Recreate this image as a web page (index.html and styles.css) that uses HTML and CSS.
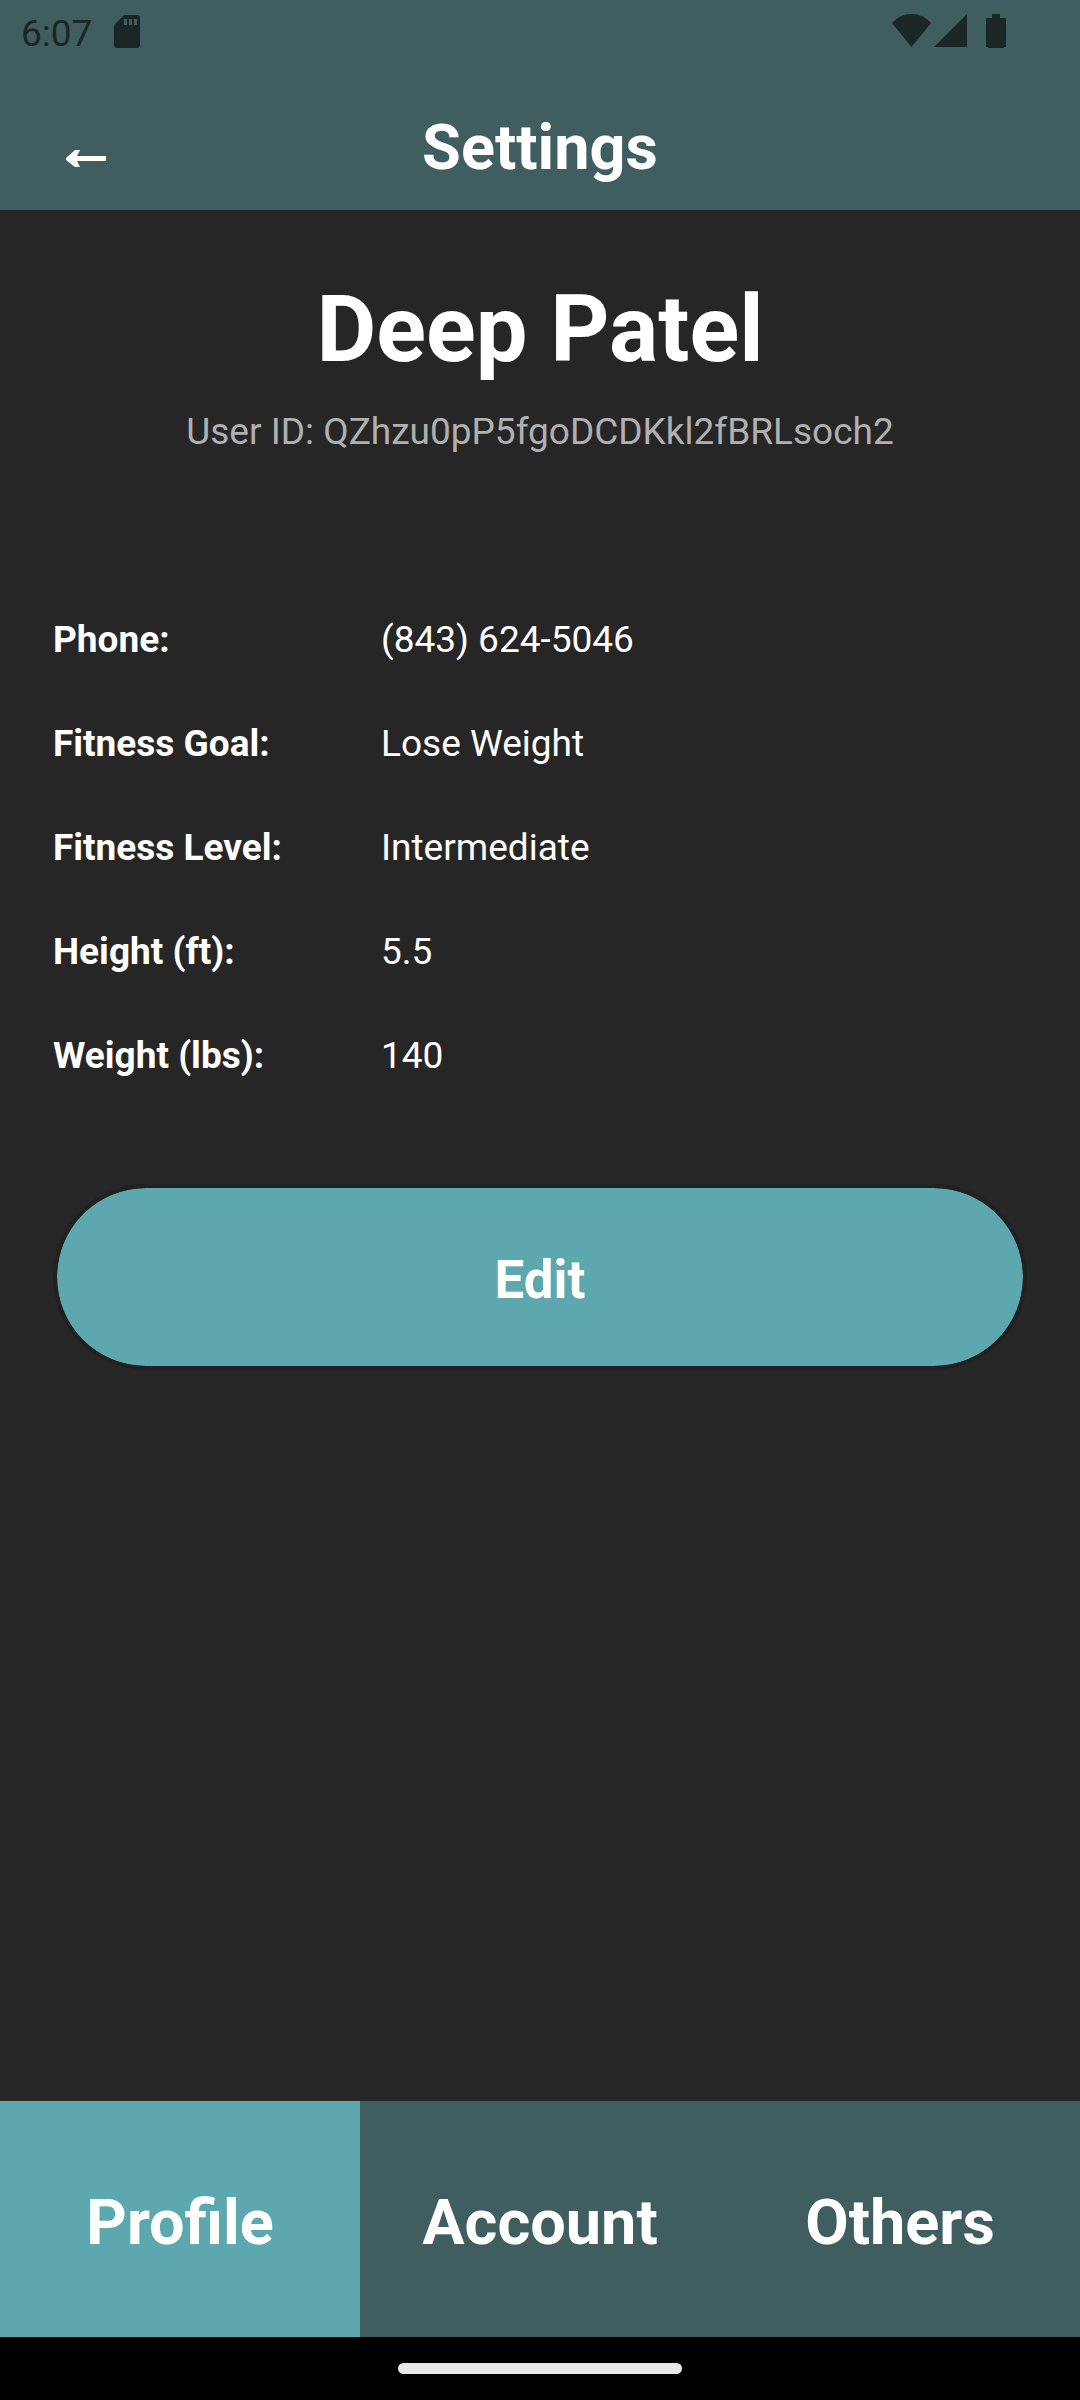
FILE: index.html
```html
<!DOCTYPE html>
<html lang="en">
<head>
  <meta charset="utf-8">
  <meta name="viewport" content="width=device-width, initial-scale=1">
  <title>Settings</title>
  <link rel="stylesheet" href="styles.css">
</head>
<body>
  <div class="status-bar">
    <div class="status-group">
      <span class="clock">6:07</span>
      <svg class="icon-sd" width="26" height="34" viewBox="0 0 26 34" aria-hidden="true">
        <path fill="currentColor" fill-rule="evenodd" d="M10 0H23Q26 0 26 3V30Q26 33 23 33H3Q0 33 0 30V10ZM10 4V10H13V4ZM15 4V10H18V4ZM20 4V10H23V4Z"/>
      </svg>
    </div>
    <div class="status-group">
      <svg width="39" height="34" viewBox="0 0 39 34" aria-hidden="true">
        <path fill="currentColor" d="M0 9Q8 0 19.500 0T39 9L19.500 33Z"/>
      </svg>
      <svg class="icon-signal" width="33" height="34" viewBox="0 0 33 34" aria-hidden="true">
        <path fill="currentColor" d="M0 33L33 0V33Z"/>
      </svg>
      <svg class="icon-battery" width="20" height="34" viewBox="0 0 20 34" aria-hidden="true">
        <path fill="currentColor" d="M6 0H14V4H19L20 5V33H18V34H2V33H0V5L1 4H6Z"/>
      </svg>
    </div>
  </div>

  <header class="app-bar">
    <button class="back" type="button" aria-label="Back">
      <svg width="40" height="18" viewBox="0 0 40 18" aria-hidden="true">
        <path fill="currentColor" d="M0 8L9 0H14L11 6H40V11H11L14 17H9L0 10Z"/>
      </svg>
    </button>
    <h1 class="title">Settings</h1>
  </header>

  <main class="profile">
    <h2 class="name">Deep Patel</h2>
    <p class="user-id">User ID: QZhzu0pP5fgoDCDKkl2fBRLsoch2</p>
    <table class="details">
      <tbody>
        <tr><th scope="row">Phone:</th><td>(843) 624-5046</td></tr>
        <tr><th scope="row">Fitness Goal:</th><td>Lose Weight</td></tr>
        <tr><th scope="row">Fitness Level:</th><td>Intermediate</td></tr>
        <tr><th scope="row">Height (ft):</th><td>5.5</td></tr>
        <tr><th scope="row">Weight (lbs):</th><td>140</td></tr>
      </tbody>
    </table>
    <button class="edit" type="button">Edit</button>
  </main>

  <nav class="tabs">
    <button class="tab tab-active" type="button" aria-current="page">Profile</button>
    <button class="tab" type="button">Account</button>
    <button class="tab" type="button">Others</button>
  </nav>
  <div class="system-nav"><div class="home-pill"></div></div>
</body>
</html>
```
FILE: styles.css
```css
* {
  box-sizing: border-box;
}

body {
  margin: 0;
  min-height: 100vh;
  display: flex;
  flex-direction: column;
  background: #262626;
  color: #fff;
  font-family: Roboto, sans-serif;
  font-size: 37px;
  line-height: 44px;
}

svg {
  display: block;
}

button {
  margin: 0;
  border: 0;
  color: inherit;
  font-family: inherit;
  font-weight: 700;
}

.status-bar {
  display: flex;
  justify-content: space-between;
  padding: 11px 74px 8px 21px;
  background: #405e5f;
  color: #1a2726;
}

.status-group {
  display: flex;
  align-items: flex-start;
  padding-top: 3px;
  height: 44px;
}

.clock {
  line-height: 40px;
}

.icon-sd {
  margin: 1px 0 0 22px;
}

.icon-signal {
  margin-left: 3px;
}

.icon-battery {
  margin-left: 19px;
}

.app-bar {
  display: grid;
  grid-template-columns: 1fr auto 1fr;
  padding: 48px 52px 25px;
  background: #405e5f;
}

.back {
  align-self: end;
  justify-self: start;
  display: flex;
  align-items: center;
  height: 52px;
  padding: 0 14px;
  background: none;
}

.title {
  margin: 0;
  font-size: 63px;
  line-height: 74px;
}

.profile {
  flex: 1;
  display: flex;
  flex-direction: column;
  padding: 66px 53px;
}

.name {
  margin: 0;
  font-size: 92px;
  line-height: 108px;
  text-align: center;
}

.user-id {
  margin: 26px 0 134px;
  color: #b0b0b0;
  text-align: center;
}

.details {
  width: 100%;
  border-collapse: collapse;
  table-layout: fixed;
  margin-bottom: 76px;
}

.details th,
.details td {
  height: 104px;
  padding: 0;
  text-align: left;
}

.details th {
  width: 328px;
}

.edit {
  padding: 61px 0 55px;
  border: 4px solid #212121;
  border-radius: 93px;
  background: #5da8af;
  background-clip: padding-box;
  font-size: 53px;
  line-height: 62px;
}

.tabs {
  display: grid;
  grid-template-columns: repeat(3, 1fr);
}

.tab {
  padding: 85px 0 77px;
  background: #405e5f;
  font-size: 63px;
  line-height: 74px;
}

.tab-active {
  background: #5da8af;
}

.system-nav {
  display: flex;
  justify-content: center;
  padding: 26px 0;
  background: #000;
}

.home-pill {
  width: 284px;
  height: 11px;
  border-radius: 6px;
  background: #e8e8e8;
}
```
